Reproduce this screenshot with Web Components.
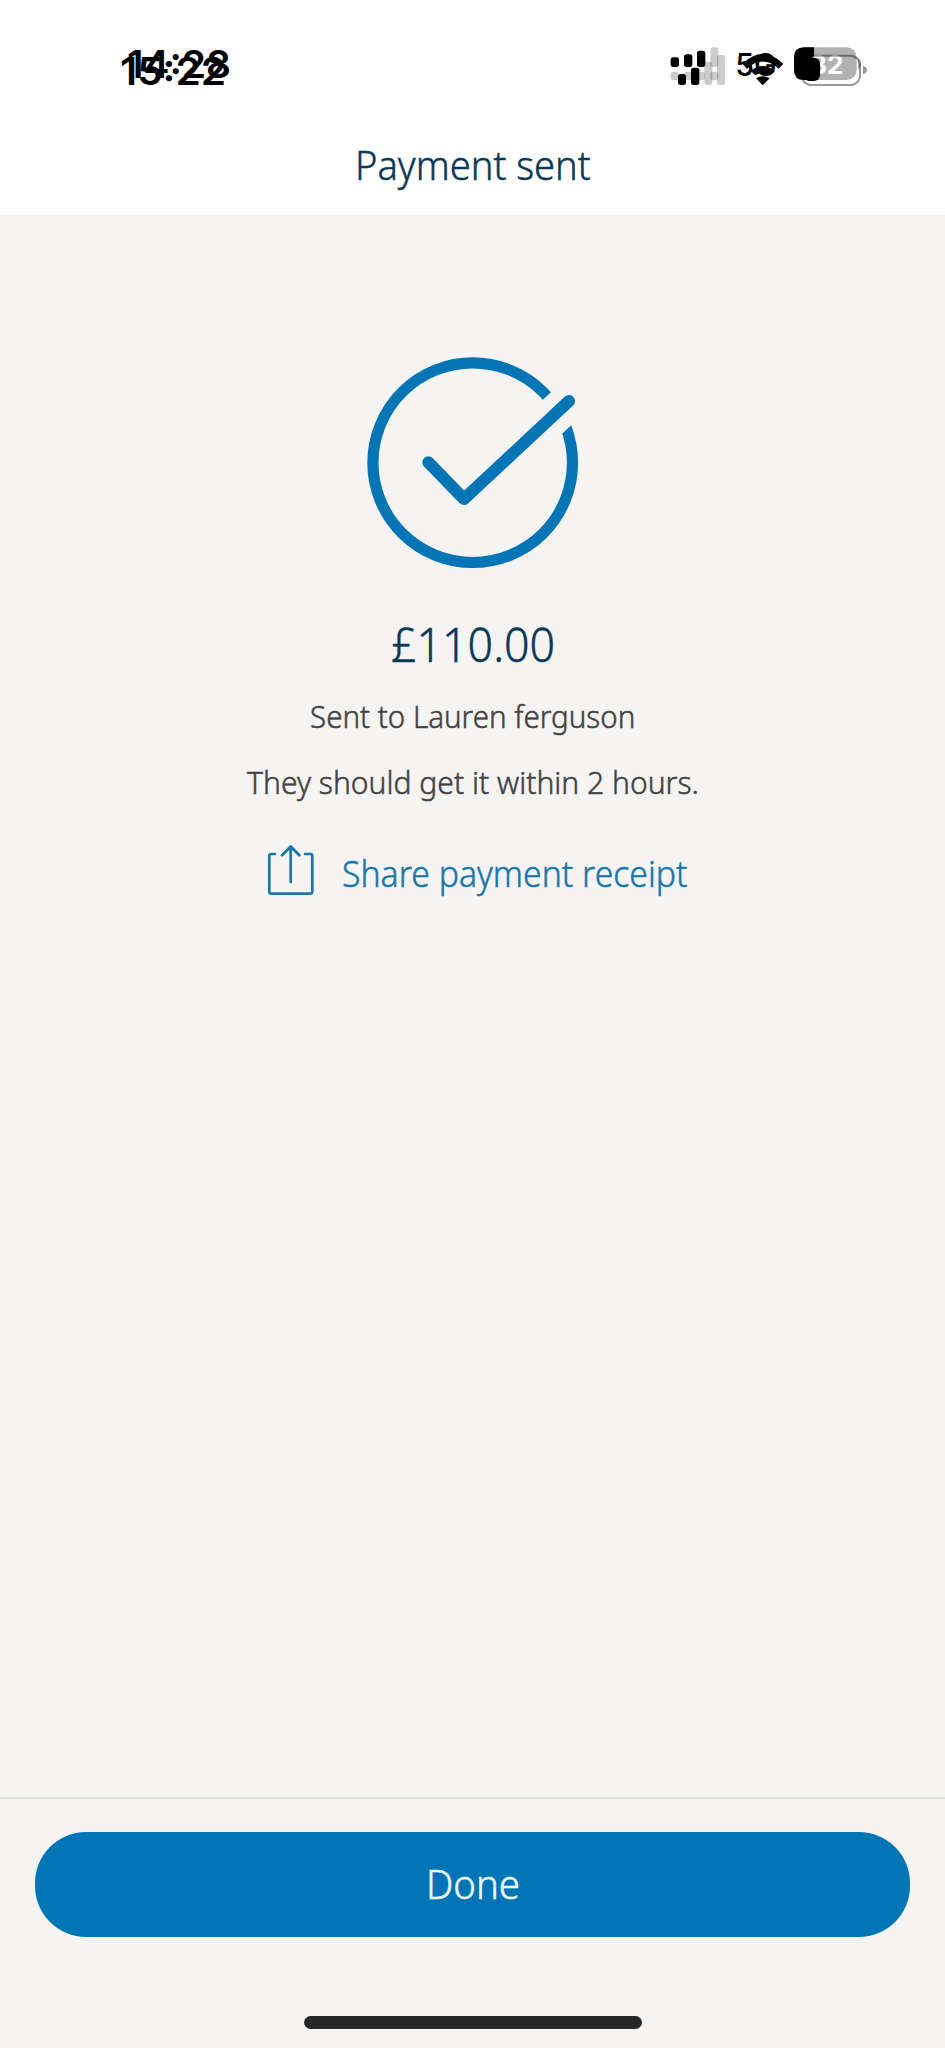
<!DOCTYPE html>
<html lang="en">
<head>
<meta charset="utf-8">
<title>Payment sent</title>
<style>
    html, body {
        margin: 0;
        height: 100%;
    }
    body {
        background:  #f5f4f3;
        font-family: "Noto Sans", "Open Sans", sans-serif;
        font-weight: 300;
    }
</style>
</head>
<body>
<payment-screen>
    <status-bar slot="status"></status-bar>
    <fit-text slot="title" width="236">Payment sent</fit-text>
    <payment-summary>
        <fit-text slot="amount" width="164">£110.00</fit-text>
        <fit-text slot="payee" width="325">Sent to Lauren ferguson</fit-text>
        <fit-text slot="timing" width="452">They should get it within 2 hours.</fit-text>
        <share-link slot="share"><fit-text width="346">Share payment receipt</fit-text></share-link>
    </payment-summary>
    <action-button slot="footer"><fit-text width="94">Done</fit-text></action-button>
</payment-screen>

<script>
class BaseElement extends HTMLElement {
    constructor() {
        super();
        const el = document.createElement('template');
        el.innerHTML = this.constructor.template;
        this.attachShadow({ mode: 'open' });
        this.shadowRoot.appendChild(el.content.cloneNode(true));
    }
}

/**
 * One line of text, condensed or widened to a given width
 */
class FitText extends BaseElement {
    static tag = "fit-text";
    static template = `
    <style>
        :host {
            display:     block;
            white-space: nowrap;
        }
        span {
            display:             inline-block;
            transform-origin:    0 50%;
            -webkit-text-stroke: .5px currentColor;
        }
    </style>
    <span><slot></slot></span>`;

    connectedCallback() {
        const width = Number(this.getAttribute('width'));
        const span = this.shadowRoot.querySelector('span');
        this.style.width = width + 'px';
        span.style.transform = `scaleX(${width / span.offsetWidth})`;
    }
}

class StatusBar extends BaseElement {
    static tag = "status-bar";
    static template = `
    <style>
        :host {
            display:         flex;
            justify-content: space-between;
            height:          115px;
        }
        svg {
            display: block;
        }
        text {
            font-family: Inter, "Liberation Sans", sans-serif;
        }
        .time {
            margin-left: 110px;
            font-size:   38px;
            font-weight: 600;
        }
        .icons {
            margin-right: 65px;
        }
    </style>
    <svg class="time" width="140" height="115" viewBox="110 0 140 115">
        <text x="127" y="78" textLength="104" lengthAdjust="spacingAndGlyphs">14:28</text>
        <text x="120" y="85" textLength="106" lengthAdjust="spacingAndGlyphs">15:22</text>
    </svg>
    <svg class="icons" width="220" height="115" viewBox="660 0 220 115">
        <g transform="translate(660 35) scale(.33333)">
            <!-- signal -->
            <g fill="#000" fill-opacity=".2">
                <rect x="151" y="37" width="24" height="59" rx="8"/>
                <rect x="32" y="110" width="24" height="26" rx="9"/>
                <rect x="72" y="110" width="24" height="26" rx="9"/>
                <rect x="111" y="110" width="24" height="26" rx="9"/>
                <rect x="151" y="110" width="24" height="26" rx="9"/>
                <rect x="133" y="80" width="24" height="70" rx="8"/>
                <rect x="171" y="60" width="24" height="90" rx="8"/>
            </g>
            <rect x="32" y="67" width="25" height="29" rx="8"/>
            <rect x="72" y="58" width="25" height="38" rx="8"/>
            <rect x="111" y="47" width="25" height="49" rx="8"/>
            <rect x="54" y="117" width="24" height="33" rx="8"/>
            <rect x="93" y="98" width="25" height="52" rx="8"/>
            <!-- network and wifi -->
            <text x="226" y="124" font-size="92" font-weight="500" textLength="124" lengthAdjust="spacingAndGlyphs">5G</text>
            <path d="M247 86Q308 28 370 86L356 101Q308 58 261 101Z"/>
            <path d="M272 108Q308 78 345 108L331 121Q308 106 286 121Z"/>
            <path d="M288 130Q308 117 329 130L308 151Z"/>
            <!-- battery -->
            <rect x="402" y="37" width="188" height="98" rx="30" fill="#b2b2b2"/>
            <path d="M594 68Q603 76 603 86T594 104Z" fill="#b2b2b2"/>
            <path d="M462 37H432Q402 37 402 67V105Q402 135 432 135H462Z"/>
            <text x="450" y="118" font-size="76" font-weight="700" fill="#fff" textLength="101" lengthAdjust="spacingAndGlyphs">32</text>
            <rect x="425" y="62" width="175" height="88" rx="29" fill="none" stroke="#000" stroke-opacity=".4" stroke-width="6"/>
            <path d="M609 92Q621 96 621 105T609 118Z" fill="#999"/>
            <rect x="430" y="68" width="50" height="70" rx="18"/>
        </g>
    </svg>`;
}

class CheckIcon extends BaseElement {
    static tag = "check-icon";
    static template = `
    <style>
        :host, svg {
            display: block;
        }
    </style>
    <svg width="225" height="225" viewBox="360 350 225 225" fill="none" stroke="#0675b5">
        <circle cx="472.7" cy="462.7" r="99.8" stroke-width="11.2"/>
        <!-- opening in the ring round the tick -->
        <path d="M520 447L600 372.4" stroke="#f5f4f3" stroke-width="38"/>
        <path d="M428.3 462.3L464 499L569 401" stroke-width="12" stroke-linecap="round" stroke-linejoin="round"/>
    </svg>`;
}

class ShareLink extends BaseElement {
    static tag = "share-link";
    static template = `
    <style>
        :host {
            display:      flex;
            align-items:  flex-end;
            gap:          26px;
            padding-left: 9px;
            color:        #1a76a9;
            font-size:    36px;
            line-height:  50px;
        }
    </style>
    <svg width="50" height="56" viewBox="266 843 50 56" fill="none" stroke="currentColor" stroke-width="2.7" stroke-linecap="round" stroke-linejoin="round">
        <path d="M275 854H271Q269.3 854 269.3 856V891.5Q269.3 893.7 271.5 893.7H310Q312.3 893.7 312.3 891.5V856Q312.3 854 310.5 854H305"/>
        <path d="M290.7 882V846.5M282 855.3L290.7 846.5L299.4 855.3"/>
    </svg>
    <slot></slot>`;
}

class PaymentSummary extends BaseElement {
    static tag = "payment-summary";
    static template = `
    <style>
        :host {
            display:        flex;
            flex-direction: column;
            align-items:    center;
            padding-top:    135px;
            color:          #424242;
            font-size:      31px;
            line-height:    44px;
        }
        ::slotted([slot=amount]) {
            margin:      39px 0 20px;
            color:       #0b3857;
            font-size:   48px;
            line-height: 60px;
        }
        ::slotted([slot=timing]) {
            margin-top: 22px;
        }
        ::slotted([slot=share]) {
            margin-top: 39px;
        }
    </style>
    <check-icon></check-icon>
    <slot name="amount"></slot>
    <slot name="payee"></slot>
    <slot name="timing"></slot>
    <slot name="share"></slot>`;

    // the summary names its own slots, so the children are placed by their slot attribute
}

class ActionButton extends BaseElement {
    static tag = "action-button";
    static template = `
    <style>
        :host {
            display: block;
        }
        button {
            display:         flex;
            justify-content: center;
            width:           100%;
            height:          105px;
            padding:         0;
            border:          0;
            border-radius:   51px;
            background:      #0075b6;
            color:           #eefaff;
            font:            inherit;
            font-size:       40px;
            line-height:     103px;
        }
    </style>
    <button><slot></slot></button>`;
}

class PaymentScreen extends BaseElement {
    static tag = "payment-screen";
    static template = `
    <style>
        :host {
            display:        flex;
            flex-direction: column;
            height:         100%;
        }
        header {
            height:     215px;
            background: #fff;
        }
        .title {
            display:         flex;
            justify-content: center;
            color:           #0b3857;
            font-size:       40px;
            line-height:     99px;
        }
        main {
            flex: 1;
        }
        footer {
            box-sizing: border-box;
            height:     251px;
            padding:    33px 35px 0;
            border-top: 2px solid #dcdcdb;
        }
        .home {
            width:         338px;
            height:        13px;
            margin:        79px auto 0;
            border-radius: 6.5px;
            background:    #272727;
        }
    </style>
    <header>
        <slot name="status"></slot>
        <div class="title"><slot name="title"></slot></div>
    </header>
    <main><slot></slot></main>
    <footer>
        <slot name="footer"></slot>
        <div class="home"></div>
    </footer>`;
}

// containers first, so that the text is measured in its final font size
[PaymentScreen, StatusBar, PaymentSummary, CheckIcon, ShareLink, ActionButton, FitText].forEach(c => {
    window.customElements.define(c.tag, c);
});
</script>
</body>
</html>
